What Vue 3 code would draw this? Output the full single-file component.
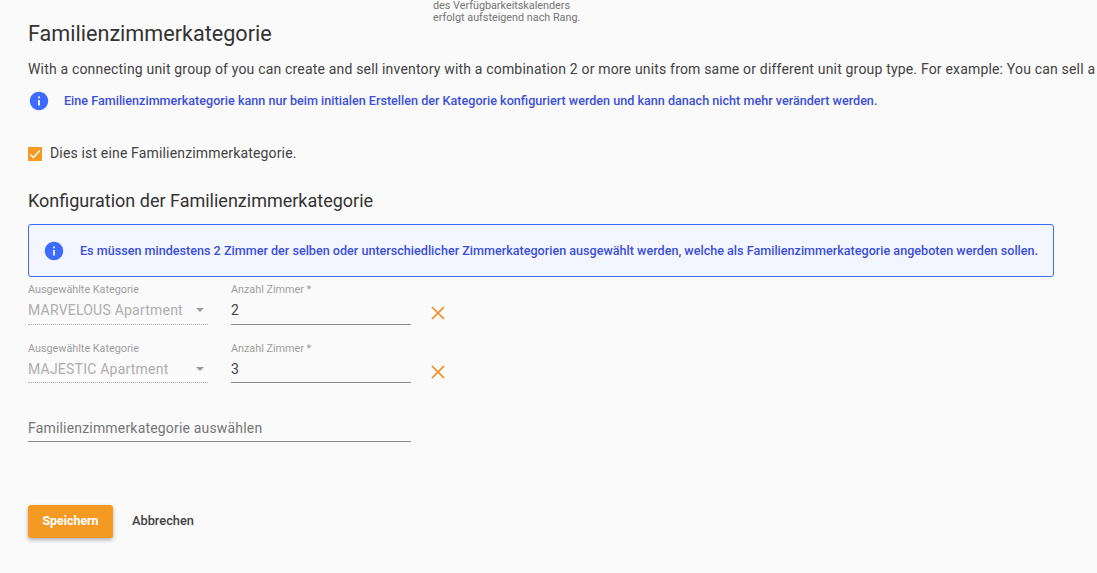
<script setup>
const rows = [
  { id: 1, kategorie: 'MARVELOUS Apartment', anzahl: 2 },
  { id: 2, kategorie: 'MAJESTIC Apartment', anzahl: 3 }
]
</script>

<template>
  <div class="page">
    <div class="top-note">
      des Verfügbarkeitskalenders<br />
      erfolgt aufsteigend nach Rang.
    </div>

    <h2 class="title">Familienzimmerkategorie</h2>
    <p class="intro">With a connecting unit group of you can create and sell inventory with a combination 2 or more units from same or different unit group type. For example: You can sell a</p>

    <div class="hint">
      <svg class="info" viewBox="0 0 24 24"><path d="M12 2C6.48 2 2 6.48 2 12s4.48 10 10 10 10-4.48 10-10S17.52 2 12 2zm1 15h-2v-6h2v6zm0-8h-2V7h2v2z" /></svg>
      <span>Eine Familienzimmerkategorie kann nur beim initialen Erstellen der Kategorie konfiguriert werden und kann danach nicht mehr verändert werden.</span>
    </div>

    <label class="check">
      <span class="box">
        <svg viewBox="0 0 14 14"><path d="M2.4 7.4l3 3 6.2-6.6" /></svg>
      </span>
      Dies ist eine Familienzimmerkategorie.
    </label>

    <h3 class="subtitle">Konfiguration der Familienzimmerkategorie</h3>

    <div class="alert">
      <svg class="info" viewBox="0 0 24 24"><path d="M12 2C6.48 2 2 6.48 2 12s4.48 10 10 10 10-4.48 10-10S17.52 2 12 2zm1 15h-2v-6h2v6zm0-8h-2V7h2v2z" /></svg>
      <span>Es müssen mindestens 2 Zimmer der selben oder unterschiedlicher Zimmerkategorien ausgewählt werden, welche als Familienzimmerkategorie angeboten werden sollen.</span>
    </div>

    <div v-for="row in rows" :key="row.id" class="row">
      <div class="field select">
        <div class="label">Ausgewählte Kategorie</div>
        <div class="value disabled">
          <span>{{ row.kategorie }}</span>
          <i class="caret"></i>
        </div>
      </div>
      <div class="field count">
        <div class="label">Anzahl Zimmer *</div>
        <div class="value">{{ row.anzahl }}</div>
      </div>
      <svg class="remove" viewBox="0 0 14 14"><path d="M1 1l12 12M13 1L1 13" /></svg>
    </div>

    <div class="picker">Familienzimmerkategorie auswählen</div>

    <div class="actions">
      <button class="btn-save">Speichern</button>
      <button class="btn-cancel">Abbrechen</button>
    </div>
  </div>
</template>

<style>
html, body {
  margin: 0;
  background: #fafafa;
  overflow: hidden;
}
</style>

<style scoped>
.page {
  height: 573px;
  box-sizing: border-box;
  padding-left: 28px;
  background: #fafafa;
  font-family: Roboto, "Liberation Sans", sans-serif;
  color: #424242;
  overflow: hidden;
}

.top-note {
  margin-left: 405px;
  height: 24px;
  font-size: 10.8px;
  line-height: 12px;
  color: #757575;
}

.title {
  margin: 0;
  font-size: 21.6px;
  line-height: 20px;
  font-weight: 400;
  color: #333;
}

.intro {
  margin: 15px 0 0;
  font-size: 14px;
  line-height: 20px;
  letter-spacing: 0.18px;
  white-space: nowrap;
  color: #424242;
}

.hint {
  display: flex;
  align-items: center;
  margin-top: 11px;
  font-size: 12.6px;
  font-weight: 500;
  line-height: 20px;
  color: #3b4fd8;
}

.info {
  width: 22px;
  height: 22px;
  flex: none;
  margin-right: 14px;
  fill: #3d6bff;
}

.check {
  display: flex;
  align-items: center;
  margin-top: 31px;
  font-size: 14px;
  line-height: 20px;
  letter-spacing: 0.16px;
}

.box {
  width: 14px;
  height: 14px;
  margin-top: 1px;
  margin-right: 8px;
  background: #f49a23;
}

.box svg {
  display: block;
  fill: none;
  stroke: #fff;
  stroke-width: 1.4;
}

.subtitle {
  margin: 28px 0 0;
  font-size: 18px;
  line-height: 20px;
  font-weight: 400;
  color: #333;
}

.alert {
  display: flex;
  align-items: center;
  box-sizing: border-box;
  width: 1026px;
  height: 53px;
  margin-top: 13px;
  padding-left: 14px;
  border: 1px solid #3d6bff;
  border-radius: 3px;
  background: #f3f6ff;
  font-size: 12.6px;
  font-weight: 500;
  color: #3b4fd8;
}

.alert .info {
  margin-right: 15px;
}

.row {
  display: flex;
  align-items: flex-start;
  height: 58.9px;
}

.field {
  padding-top: 7px;
}

.select {
  width: 180px;
  margin-right: 23px;
}

.count {
  width: 180px;
  margin-right: 20px;
}

.label {
  font-size: 10.8px;
  line-height: 12px;
  color: #9e9e9e;
}

.value {
  display: flex;
  align-items: center;
  justify-content: space-between;
  height: 28.5px;
  font-size: 14px;
  letter-spacing: 0.18px;
  color: #424242;
  border-bottom: 1px solid #8a8a8a;
  box-sizing: border-box;
}

.disabled {
  color: #aeaeae;
  letter-spacing: 0.22px;
  border-bottom: 1px dotted #aaa;
}

.caret {
  width: 0;
  height: 0;
  margin-right: 4px;
  border-left: 4px solid transparent;
  border-right: 4px solid transparent;
  border-top: 4px solid #9a9a9a;
}

.remove {
  width: 14px;
  height: 14px;
  margin-top: 29px;
  fill: none;
  stroke: #f28a1e;
  stroke-width: 1.7;
}

.picker {
  box-sizing: border-box;
  width: 383px;
  height: 33px;
  margin-top: 14.2px;
  padding-top: 9px;
  font-size: 14px;
  line-height: 20px;
  letter-spacing: 0.18px;
  color: #757575;
  border-bottom: 1px solid #8a8a8a;
}

.actions {
  display: flex;
  align-items: center;
  margin-top: 63px;
}

.btn-save {
  width: 85px;
  height: 33px;
  padding: 0 0 2px;
  border: none;
  border-radius: 3px;
  background: #f49a23;
  color: #fff;
  font: 700 12.4px Roboto, sans-serif;
  box-shadow: 0 2px 4px rgba(0,0,0,0.3);
}

.btn-cancel {
  margin-left: 19px;
  padding: 0 0 2px;
  border: none;
  background: none;
  color: #424242;
  font: 500 12.8px Roboto, sans-serif;
}
</style>
